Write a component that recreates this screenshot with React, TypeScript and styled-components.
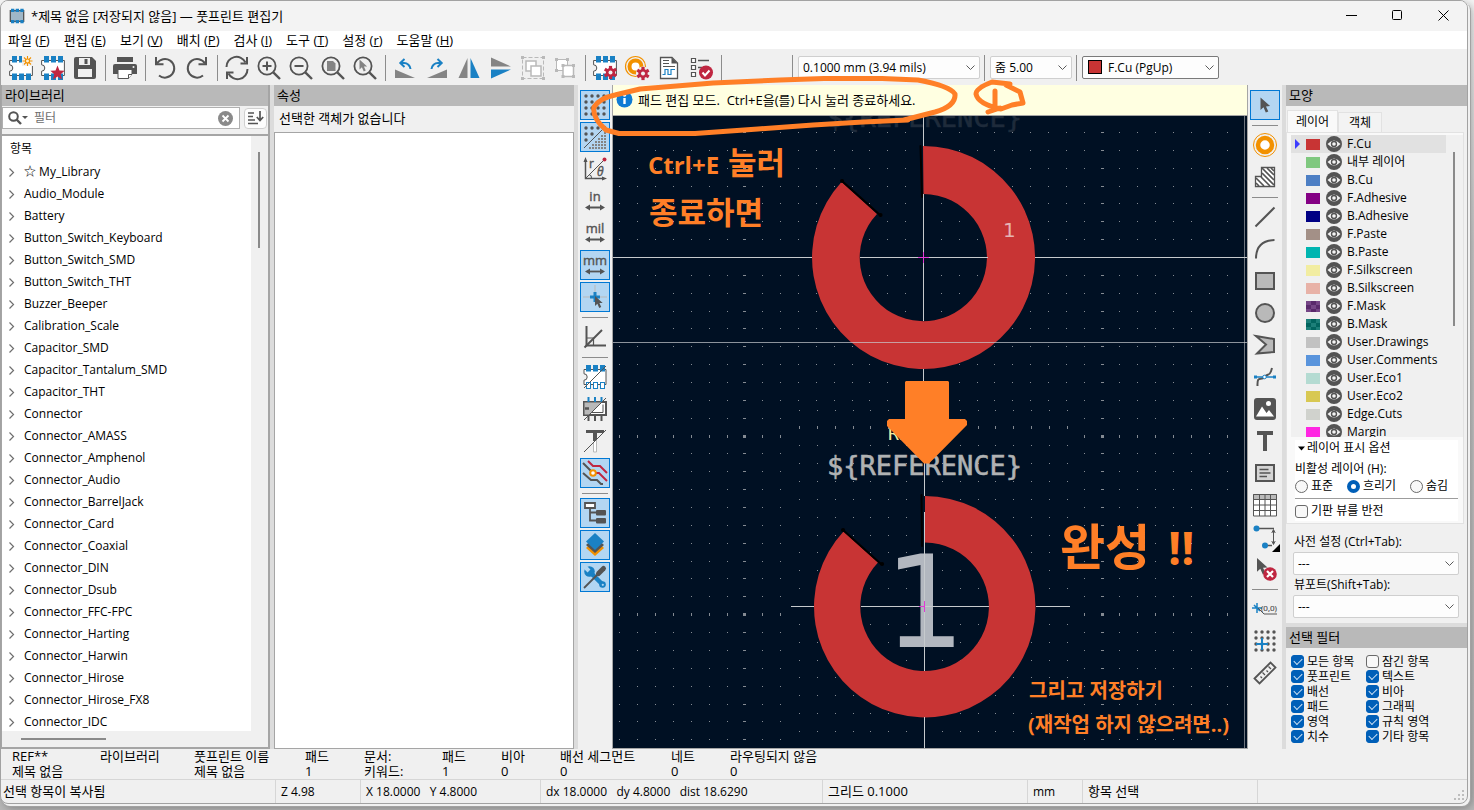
import React from "react";
import styled, { createGlobalStyle, css } from "styled-components";

const INK = "#545454";
const MID = "#848484";
const PALE = "#b9b9b9";
const BLUE = "#1a81c4";
const RED = "#bf2641";
const AMBER = "#f29100";
const MARKER = "#ff7f27";

const GlobalStyle = createGlobalStyle`
  * { box-sizing: border-box; }
  body {
    margin: 0;
    background: linear-gradient(#f4f4f4, #d0d0d0 30%, #b8b8b8);
    font-family: "Open Sans", "Noto Sans CJK KR", sans-serif;
    font-size: 12px;
    line-height: 16px;
    color: #000;
  }
  button, input, select { font: inherit; color: inherit; }
  button { border: 0; padding: 0; background: none; }
  ul { list-style: none; margin: 0; padding: 0; }
  svg { display: block; }
`;

/* ---------- window frame ---------- */

const Page = styled.div`
  height: 100vh;
  padding: 0 6px 6px 0;
  display: flex;
`;

const AppWindow = styled.div`
  flex: 1;
  min-width: 0;
  display: flex;
  flex-direction: column;
  overflow: hidden;
  background: #f0f0f0;
  border: 1px solid #a2a2a2;
  border-radius: 8px;
  box-shadow: 2px 2px 0 0 #f1f1f1, 3px 3px 0 0 #a2a2a2, 4px 4px 8px 0 rgba(0, 0, 0, 0.3);
`;

const TitleBar = styled.header`
  height: 30px;
  flex: none;
  display: flex;
  align-items: center;
  gap: 6px;
  padding: 0 1px 1px 8px;
  background: #f3f3f3;
`;

const Title = styled.h1`
  flex: 1;
  margin: 0;
  font-size: 13px;
  line-height: 16px;
  font-weight: 400;
`;

const WindowButtons = styled.div`
  display: flex;
`;

const WindowButton = styled.button`
  width: 46px;
  height: 28px;
  display: grid;
  place-items: center;
`;

const MenuBar = styled.nav`
  height: 18px;
  flex: none;
  display: flex;
  gap: 14px;
  padding: 0 7px;
  background: #fff;
`;

const MenuButton = styled.button`
  font-size: 13px;
  line-height: 18px;
  white-space: nowrap;
`;

const MainToolbar = styled.div`
  height: 36px;
  flex: none;
  display: flex;
  align-items: center;
  padding: 1px 5px 0;
`;

const ToolGroup = styled.div`
  display: flex;
  gap: 2px;
  padding-right: 5px;
`;

const ToolButton = styled.button<{ $on?: boolean }>`
  width: 30px;
  height: 30px;
  flex: none;
  display: grid;
  place-items: center;
  border: 1px solid transparent;
  ${(p) => p.$on && css`
    background: #b3d6f2;
    border-color: #0078d4;
  `}
`;

const Divider = styled.span<{ $before?: number; $after?: number }>`
  width: 1px;
  height: 26px;
  flex: none;
  margin-left: ${(p) => p.$before ?? 0}px;
  margin-right: ${(p) => p.$after ?? 4}px;
  background: #8c8c8c;
`;

const SelectWrap = styled.div<{ $w?: number; $strong?: boolean }>`
  position: relative;
  width: ${(p) => (p.$w ? `${p.$w}px` : "auto")};
  height: 23px;
  flex: none;
  > svg { position: absolute; right: 5px; top: 9px; pointer-events: none; }
  select { border-color: ${(p) => (p.$strong ? "#7a7a7a" : "#cfcfcf")}; }
`;

const Select = styled.select<{ $indent?: number }>`
  appearance: none;
  width: 100%;
  height: 100%;
  padding: 0 18px 0 ${(p) => p.$indent ?? 4}px;
  border: 1px solid;
  border-radius: 2px;
  background: #fdfdfd;
`;

const SelectSwatch = styled.span`
  position: absolute;
  left: 6px;
  top: 4px;
  width: 14px;
  height: 14px;
  background: #c83434;
  border: 1px solid #000;
`;

const Workspace = styled.main`
  flex: 1;
  min-height: 0;
  display: flex;
`;

const PaneHeader = styled.h2`
  height: 21px;
  flex: none;
  margin: 0;
  padding: 0 3px;
  line-height: 20px;
  font-size: 13px;
  font-weight: 400;
  background: #b9b9b9;
`;

const Sash = styled.div`
  flex: none;
  width: 4px;
  background: #dcdcdc;
`;

const HSash = styled.div`
  flex: none;
  height: 4px;
  background: #dcdcdc;
`;

/* ---------- library tree ---------- */

const LibraryPane = styled.aside`
  width: 269px;
  flex: none;
  display: flex;
  flex-direction: column;
  border: solid #a5a5a5;
  border-width: 0 2px 0 1px;
`;

const FilterRow = styled.div`
  display: flex;
  align-items: center;
  justify-content: space-between;
  padding: 1px 1px 5px 0;
`;

const FilterBox = styled.div`
  width: 238px;
  height: 22px;
  display: flex;
  align-items: center;
  gap: 5px;
  padding: 0 6px 0 5px;
  background: #fff;
  border: 1px solid #b0b0b0;
`;

const FilterInput = styled.input`
  flex: 1;
  min-width: 0;
  border: 0;
  outline: 0;
  padding: 0;
  background: none;
  &::placeholder { color: #6d6d6d; opacity: 1; }
`;

const SortButton = styled.button`
  width: 23px;
  height: 21px;
  display: grid;
  place-items: center;
  border: 1px solid #d0d0d0;
  border-radius: 4px;
  background: #fdfdfd;
`;

const TreeBox = styled.div`
  flex: 1;
  min-height: 0;
  display: flex;
  border-top: 2px solid #a5a5a5;
  border-bottom: 2px solid #a5a5a5;
  background: #fff;
`;

const TreeMain = styled.div`
  flex: 1;
  min-width: 0;
  display: flex;
  flex-direction: column;
`;

const TreeCaption = styled.div`
  height: 25px;
  flex: none;
  padding: 5px 8px;
`;

const TreeList = styled.ul`
  flex: 1;
  min-height: 0;
  overflow: hidden;
`;

const TreeRow = styled.button`
  width: 100%;
  height: 22px;
  display: flex;
  align-items: center;
  gap: 8px;
  padding: 0 6px;
  text-align: left;
`;

const HScroll = styled.div`
  height: 16px;
  flex: none;
  display: flex;
  align-items: center;
  padding-left: 19px;
  background: #f0f0f0;
  &::after { content: ""; width: 85px; height: 2px; background: #8a8a8a; }
`;

const VScroll = styled.div<{ $top: number; $len: number }>`
  width: 17px;
  flex: none;
  padding: ${(p) => p.$top}px 0 0 7px;
  background: #f0f0f0;
  &::after {
    content: "";
    display: block;
    width: 2px;
    height: ${(p) => p.$len}px;
    background: #8a8a8a;
  }
`;

/* ---------- properties ---------- */

const PropertiesPane = styled.aside`
  width: 300px;
  flex: none;
  display: flex;
  flex-direction: column;
`;

const EmptyNote = styled.p`
  margin: 0;
  height: 26px;
  padding: 0 5px;
  font-size: 13px;
  line-height: 24px;
`;

const PropertyGrid = styled.div`
  flex: 1;
  background: #fff;
  border: 1px solid #a5a5a5;
`;

/* ---------- side toolbars and canvas ---------- */

const SideToolbar = styled.div`
  flex: none;
  display: flex;
  flex-direction: column;
  gap: 2px;
  padding: 5px 2px;
`;

const SideDivider = styled.span`
  height: 6px;
  margin: 0 2px;
  display: flex;
  align-items: center;
  &::after { content: ""; flex: 1; height: 1px; background: #8c8c8c; }
`;

const CanvasColumn = styled.section`
  position: relative;
  flex: 1;
  min-width: 0;
  display: flex;
  flex-direction: column;
  border: solid #a5a5a5;
  border-width: 0 1px 1px 1px;
`;

const InfoBar = styled.div`
  height: 31px;
  flex: none;
  display: flex;
  align-items: center;
  gap: 5px;
  padding: 0 3px 1px;
  font-size: 13px;
  background: #ffffe1;
  border-bottom: 1px solid #a5a5a5;
  white-space: pre;
`;

const Board = styled.svg`
  flex: 1;
  min-height: 0;
  width: 100%;
  background: #001023;
`;

const Markup = styled.svg`
  position: absolute;
  left: 0;
  top: 0;
  overflow: visible;
  pointer-events: none;
  z-index: 2;
`;

/* ---------- appearance ---------- */

const AppearancePane = styled.aside`
  width: 181px;
  flex: none;
  display: flex;
  flex-direction: column;
`;

const Tabs = styled.div`
  display: flex;
  align-items: flex-end;
  height: 26px;
  flex: none;
  padding: 0 1px;
`;

const Tab = styled.button<{ $active?: boolean }>`
  width: ${(p) => (p.$active ? 51 : 44)}px;
  height: ${(p) => (p.$active ? 22 : 20)}px;
  border: 1px solid #e2e2e2;
  border-bottom: 0;
  background: ${(p) => (p.$active ? "#f9f9f9" : "#f3f3f3")};
`;

const TabPage = styled.div`
  flex: 1;
  min-height: 0;
  display: flex;
  flex-direction: column;
  margin: 0 3px 0 0;
  padding: 2px 0 2px 4px;
  background: #f9f9f9;
  border: 1px solid #e2e2e2;
`;

const LayerArea = styled.div`
  flex: 1;
  min-height: 0;
  display: flex;
  overflow: hidden;
  background: #f0f0f0;
`;

const LayerList = styled.ul`
  flex: 1;
  min-width: 0;
`;

const LayerRow = styled.li<{ $active?: boolean }>`
  height: 18px;
  display: flex;
  align-items: center;
  background: ${(p) => (p.$active ? "#e1e1e1" : "none")};
`;

const ActiveMark = styled.span<{ $show?: boolean }>`
  width: 5px;
  margin: 0 6px 0 4px;
  border: 5px solid transparent;
  border-left-color: ${(p) => (p.$show ? "#3c3cff" : "transparent")};
  border-right: 0;
`;

const Swatch = styled.span<{ $color: string; $alt?: string }>`
  width: 14px;
  height: 11px;
  margin-right: 6px;
  background: ${(p) =>
    p.$alt
      ? `repeating-conic-gradient(${p.$color} 0 25%, ${p.$alt} 0 50%) 0 0 / 10px 8px`
      : p.$color};
`;

const EyeButton = styled.button`
  width: 16px;
  height: 16px;
  margin-right: 5px;
`;

const LayerOptions = styled.div`
  flex: none;
  display: flex;
  flex-direction: column;
  margin: 3px 5px 0 4px;
  padding-bottom: 2px;
  background: #fff;
`;

const OptionsToggle = styled.button`
  display: flex;
  align-items: center;
  gap: 2px;
  height: 16px;
  padding-left: 3px;
  line-height: 16px;
`;

const RadioSet = styled.fieldset`
  margin: 0;
  padding: 0;
  border: 0;
  min-width: 0;
`;

const RadioLegend = styled.legend`
  padding: 4px 0 0;
  line-height: 18px;
`;

const RadioRow = styled.div`
  display: flex;
  justify-content: space-between;
  padding: 0 10px 4px 0;
`;

const FlipRow = styled.div`
  border-top: 1px solid #9c9c9c;
  padding-top: 4px;
`;

const Choice = styled.label`
  display: flex;
  align-items: center;
  gap: 3px;
  height: 16px;
  white-space: nowrap;
`;

const Radio = styled.input`
  appearance: none;
  flex: none;
  width: 13px;
  height: 13px;
  margin: 0;
  border: 1px solid #6a6a6a;
  border-radius: 50%;
  background: #f8f8f8;
  &:checked { border: 4px solid #005fb8; background: #fff; }
`;

const Check = styled.input`
  appearance: none;
  flex: none;
  width: 13px;
  height: 13px;
  margin: 0;
  display: grid;
  place-items: center;
  border: 1px solid #6a6a6a;
  border-radius: 3px;
  background: #f8f8f8;
  &:checked { border-color: #005fb8; background: #005fb8; }
  &:checked::after {
    content: "";
    width: 7px;
    height: 4px;
    margin-bottom: 2px;
    border: solid #cfe3f5;
    border-width: 0 0 1px 1px;
    transform: rotate(-45deg);
  }
`;

const Presets = styled.div`
  flex: none;
  display: flex;
  flex-direction: column;
  padding: 8px 8px 5px 7px;
  label { height: 20px; line-height: 20px; padding-left: 1px; }
`;

const FilterGrid = styled.div`
  flex: none;
  display: grid;
  grid-template-columns: 75px 1fr;
  padding: 6px 4px 5px 5px;
  label { height: 15px; }
`;

/* ---------- message panel and status bar ---------- */

const MessagePanel = styled.dl`
  flex: none;
  height: 31px;
  margin: 0;
  padding-left: 11px;
  display: grid;
  grid-template-columns: 88px 94px 111px 59px 78px 59px 59px 111px 59px 1fr;
  font-size: 13px;
  line-height: 15px;
  border-bottom: 1px solid #d6d6d6;
  dt, dd { margin: 0; height: 15px; white-space: nowrap; }
`;

const StatusBar = styled.footer`
  flex: none;
  height: 23px;
  display: grid;
  grid-template-columns: 275px 85px 180px 282px 205px 55px 175px 1fr;
  line-height: 23px;
`;

const StatusCell = styled.span<{ $large?: boolean }>`
  padding-left: 5px;
  font-size: ${(p) => (p.$large ? 13 : 12)}px;
  white-space: pre;
  border-right: 1px solid #d6d6d6;
  &:first-child { padding-left: 2px; }
  &:last-child { border: 0; display: flex; align-items: flex-end; justify-content: flex-end; }
`;

/* ---------- icons ---------- */

const gear = (x: number, y: number, s = 1) => (
  <g transform={`translate(${x} ${y}) scale(${s})`}>
    <circle r="4.6" fill={RED} />
    {[0, 60, 120].map((a) => (
      <rect key={a} x="-1.6" y="-6.6" width="3.2" height="13.2" fill={RED} transform={`rotate(${a})`} />
    ))}
    <circle r="2" fill="#f0f0f0" />
  </g>
);

const chip = (
  <g>
    <path d="M.6 4.5V8.8a3 3 0 0 1 0 6.4v4.3H23.4V4.5z" fill="#fff" stroke={INK} strokeWidth="1" />
    {[3, 10, 17].map((x) => (
      <g key={x} fill={BLUE}>
        <rect x={x} y="0" width="5" height="6.5" />
        <rect x={x} y="17.5" width="5" height="6.5" />
      </g>
    ))}
  </g>
);

const dots = (xs: number[], ys: number[], r: number, skip?: (x: number, y: number) => boolean) =>
  ys.flatMap((y) =>
    xs.filter((x) => !skip?.(x, y)).map((x) => <circle key={`${x}-${y}`} cx={x} cy={y} r={r} fill={INK} />)
  );

const lens = (
  <g fill="none" stroke={INK} strokeWidth="2">
    <circle cx="10" cy="10" r="8.6" strokeWidth="1.8" />
    <path d="M16.3 16.3 23 23" strokeWidth="2.4" />
  </g>
);

const cursorPath = "M0 0V12.5L3 9.8 5.3 15 7.8 13.9 5.5 8.9 9.6 8.6Z";

const unit = (label: string) => (
  <g>
    <text x="12" y="12" textAnchor="middle" fontSize="13" fontFamily="Open Sans" fill={INK} stroke={INK} strokeWidth=".4">
      {label}
    </text>
    <path d="M5 18.5H19" stroke={INK} strokeWidth="1.8" />
    <path d="M2 18.5 7 15.5V21.5ZM22 18.5 17 15.5V21.5Z" fill={INK} />
  </g>
);

const slash = <path d="M1 23 23 1" stroke={INK} strokeWidth="1" />;

const icons: Record<string, React.ReactNode> = {
  newFootprint: (
    <g>
      {chip}
      <rect x="13" y="0" width="11" height="10" fill="#f0f0f0" />
      <g stroke={AMBER} strokeWidth="1.1">
        <path d="M18.5 0V10M13.5 5H23.5M15 1.5 22 8.5M22 1.5 15 8.5" />
        <circle cx="18.5" cy="5" r="2" fill="#fff3d6" />
      </g>
    </g>
  ),
  wizard: (
    <g>
      {chip}
      <path d="m16.5 9.5 2 5 5.2.3-4 3.4 1.3 5.3-4.5-2.9-4.5 2.9 1.3-5.3-4-3.4 5.2-.3z" fill={RED} />
    </g>
  ),
  save: (
    <g>
      <path d="M1 3a2 2 0 0 1 2-2H19l4 4V21a2 2 0 0 1-2 2H3a2 2 0 0 1-2-2Z" fill={INK} />
      <path d="M6 2H17V9H6Z" fill="#f0f0f0" />
      <rect x="11.5" y="3" width="3" height="5" fill={INK} />
      <path d="M5 13H19V21H5Z" fill="#f0f0f0" />
    </g>
  ),
  print: (
    <g>
      <path d="M4 1H20V6H4Z" fill={INK} />
      <path d="M2 8H22a2 2 0 0 1 2 2V18H0V10A2 2 0 0 1 2 8Z" fill={INK} />
      <path d="M5 13.5H19V18L15.5 22.5H5Z" fill="#fff" stroke={INK} />
      <path d="M15.5 22.5V18.5H19" fill="#fff" stroke={INK} />
      <circle cx="20.5" cy="11" r="1" fill="#f0f0f0" />
    </g>
  ),
  undo: (
    <g fill="none" stroke={INK} strokeWidth="2">
      <path d="M4 7.5A9.3 9.3 0 1 1 6 19.5" />
      <path d="M3 1V8.3H10.5" />
    </g>
  ),
  redo: (
    <g fill="none" stroke={INK} strokeWidth="2">
      <path d="M20 7.5A9.3 9.3 0 1 0 18 19.5" />
      <path d="M21 1V8.3H13.5" />
    </g>
  ),
  refresh: (
    <g fill="none" stroke={INK} strokeWidth="2">
      <path d="M1.5 11A10 10 0 0 1 20.5 6.5M22.5 13A10 10 0 0 1 3.5 17.5" />
      <path d="M22 1V7.5H15.5M2 23V16.5H8.5" />
    </g>
  ),
  zoomIn: <g>{lens}<path d="M10 5.5V14.5M5.5 10H14.5" stroke={INK} strokeWidth="2" /></g>,
  zoomOut: <g>{lens}<path d="M5.5 10H14.5" stroke={INK} strokeWidth="2" /></g>,
  zoomPage: <g>{lens}<path d="M6 5H12L14.5 7.5V15H6Z" fill={MID} /></g>,
  zoomObject: <g>{lens}<path d={cursorPath} fill={MID} transform="translate(6.5 3.5) scale(.8)" /></g>,
  rotateLeft: (
    <g>
      <path d="M2 13.5 22 22H2Z" fill={MID} />
      <path d="M7.5 7H11A6.5 6.5 0 0 1 17.5 13" fill="none" stroke={BLUE} strokeWidth="2" />
      <path d="M11.5 3 7.3 7 11.5 11" fill="none" stroke={BLUE} strokeWidth="2" />
    </g>
  ),
  rotateRight: (
    <g>
      <path d="M22 13.5 2 22H22Z" fill={MID} />
      <path d="M16.5 7H13A6.5 6.5 0 0 0 6.5 13" fill="none" stroke={BLUE} strokeWidth="2" />
      <path d="M12.5 3 16.7 7 12.5 11" fill="none" stroke={BLUE} strokeWidth="2" />
    </g>
  ),
  mirrorH: <g><path d="M10.5 2V22H1.5Z" fill={MID} /><path d="M13.5 2V22H22.5Z" fill={BLUE} /></g>,
  mirrorV: <g><path d="M2 1.5V10.5H22Z" fill={MID} /><path d="M2 22.5V13.5H22Z" fill={BLUE} /></g>,
  group: (
    <g fill="none" stroke={PALE}>
      <path d="M1.5 1.5H22.5V22.5H1.5Z" strokeDasharray="4 2" />
      <path d="M5 5H15V15H5Z" fill="#fff" strokeWidth="1.5" />
      <path d="M10 10H20V20H10Z" fill="#fff" strokeWidth="1.5" />
      <path d="M0 0h3v3h-3zM21 0h3v3h-3zM0 21h3v3h-3zM21 21h3v3h-3z" fill={PALE} stroke="none" />
    </g>
  ),
  ungroup: (
    <g fill="none" stroke={PALE}>
      <path d="M3.5 3.5H14.5V14.5H3.5Z" fill="#fff" />
      <path d="M10 9.5H20.5V20.5H10Z" fill="#fff" strokeWidth="1.5" />
      <path d="M2 2h3v3h-3zM13 2h3v3h-3zM2 13h3v3h-3zM8.5 8h3v3h-3zM19 8h3v3h-3zM8.5 19h3v3h-3zM19 19h3v3h-3z" fill={PALE} stroke="none" />
    </g>
  ),
  footprintSetup: <g>{chip}{gear(17.5, 16.5)}</g>,
  padSetup: (
    <g>
      <circle cx="10.5" cy="10.5" r="10" fill="none" stroke={AMBER} strokeWidth="1.2" />
      <circle cx="10.5" cy="10.5" r="6" fill="#fff" stroke={AMBER} strokeWidth="4" />
      <circle cx="18" cy="17.5" r="7" fill="#f0f0f0" />
      {gear(18, 17.5)}
    </g>
  ),
  datasheet: (
    <g>
      <path d="M3.5 1.5H15L20.5 7V22.5H3.5Z" fill="#fff" stroke={INK} strokeWidth="1.3" />
      <path d="M14.5 1.5V7.5H20.5Z" fill={INK} />
      <path d="M6 4.5H12M6 7.5H12M6 10.5H18" stroke={INK} />
      <path d="M5.5 18.5H8V13.5H11V18.5H14V13.5H18" fill="none" stroke={BLUE} strokeWidth="1.2" />
    </g>
  ),
  check: (
    <g>
      <path d="M2.5 2.5H6.5V6.5H2.5ZM2.5 9.5H6.5V13.5H2.5ZM2.5 16.5H6.5V20.5H2.5Z" fill="#fff" stroke={INK} strokeWidth="1.2" />
      <path d="M9 4.5H20M9 11.5H13" stroke={INK} strokeWidth="1.5" />
      <circle cx="17" cy="16.5" r="7" fill={RED} />
      <path d="m13.5 16.5 2.5 3 4.5-5" fill="none" stroke="#fff" strokeWidth="2" />
    </g>
  ),
  grid: <g>{dots([3, 9, 15, 21], [3, 9, 15, 21], 1.7)}</g>,
  gridOverride: (
    <g>
      {dots([3, 9, 15], [3, 9, 15], 1.7, (x, y) => x + y > 19)}
      {[0, 1, 2, 3, 4, 5].flatMap((r) =>
        Array.from({ length: r + 1 }, (_, c) => (
          <rect key={`${r}-${c}`} x={21 - c * 3} y={7 + r * 3} width="2" height="2" fill={MID} />
        ))
      )}
      {slash}
    </g>
  ),
  polar: (
    <g stroke={INK} fill="none">
      <path d="M2.5 3V21.5H21" strokeWidth="1.5" />
      <path d="M.5 5 2.5 0 4.5 5ZM19 19.5 24 21.5 19 23.5Z" fill={INK} stroke="none" />
      <path d="M2.5 21.5 21 3M6 17.5Q9 18 8.5 21.5" />
      <circle cx="21.5" cy="2.5" r="2" fill={RED} stroke="none" />
      <text x="6" y="11" fontSize="12" fill={INK} strokeWidth=".4">r</text>
      <text x="14" y="19" fontSize="12" fontStyle="italic" fill={INK} strokeWidth=".4">θ</text>
    </g>
  ),
  inch: unit("in"),
  mil: unit("mil"),
  mm: unit("mm"),
  crosshair: (
    <g>
      <path d="M12 0V12M0 12H24" stroke={PALE} />
      <path d="M12 7V17M7 12H17" stroke={BLUE} strokeWidth="3" />
      <path d={cursorPath} fill={INK} transform="translate(12 11) scale(.8)" />
    </g>
  ),
  angle: (
    <g fill="none" stroke={INK}>
      <path d="M3.5 1V20.5H23" strokeWidth="2" />
      <path d="M1.5 22.5 19 5" strokeWidth="2" />
      <path d="M4 13H10.5V20" strokeWidth="1.2" />
    </g>
  ),
  padOutline: (
    <g>
      <path d="M1 4.5V8.8a3 3 0 0 1 0 6.4v4.3H23V4.5z" fill="#fff" stroke={INK} />
      {[3, 10, 17].map((x) => (
        <g key={x}>
          <rect x={x} y="0" width="5" height="6.5" fill={BLUE} />
          <rect x={x + 0.5} y="17.5" width="4" height="6" fill="#fff" stroke={BLUE} />
        </g>
      ))}
      {slash}
    </g>
  ),
  padFill: (
    <g>
      <path d="M1 5H23V18H1Z" fill="#fff" stroke={INK} strokeWidth="2" />
      <path d="M20 7.5V15.5H9" fill="none" stroke={INK} />
      <path d="M1 5H19L6 18H1Z" fill={PALE} stroke={INK} />
      <path d="M5.5 0V5M12 0V5M18.5 0V5" stroke={BLUE} strokeWidth="2" />
      <path d="M5.5 19V24M12 19V24M18.5 19V24" stroke={INK} strokeWidth="2" />
      <path d="M2 11.5h4" stroke={INK} strokeWidth="2.5" />
      {slash}
    </g>
  ),
  textOutline: (
    <g>
      <path d="M3 2.5H21" stroke={INK} strokeWidth="3" />
      <path d="M12 3V12" stroke={INK} strokeWidth="4" />
      <path d="M10.5 13V23H13.5V11" fill="#fff" stroke={PALE} />
      {slash}
    </g>
  ),
  tracks: (
    <g fill="none" strokeWidth="2">
      <path d="M5 0 10 5H17L24 12M12 12H16L24 20" stroke={RED} />
      <path d="M0 2 8 10M0 12 8 19H14L18 23H20" stroke={INK} />
      <circle cx="10" cy="12" r="2.8" stroke={AMBER} fill="#fff" />
    </g>
  ),
  tree: (
    <g>
      <path d="M2 2H12V7H2Z" fill="#fff" stroke={INK} strokeWidth="1.8" />
      <path d="M7 7V19.5H14M7 11.5H14" fill="none" stroke={INK} strokeWidth="1.8" />
      <rect x="13" y="9" width="10" height="5.5" rx="1" fill={INK} />
      <rect x="13" y="17" width="10" height="5.5" rx="1" fill={INK} />
    </g>
  ),
  layers: (
    <g>
      <path d="M12 6.5 21 15 12 23 3 15Z" fill={AMBER} />
      <path d="M12 4 21 12 12 20 3 12Z" fill={INK} />
      <path d="M12 0 21 8.5 12 17 3 8.5Z" fill={BLUE} />
    </g>
  ),
  tools: (
    <g>
      <path d="M6.5 6.5 20 20" stroke={BLUE} strokeWidth="4.5" strokeLinecap="round" />
      <circle cx="6.5" cy="6.5" r="5.3" fill={BLUE} />
      <path d="M0 0 6 6" stroke="#b3d6f2" strokeWidth="4" />
      <circle cx="19.5" cy="19.5" r="3.3" fill={BLUE} />
      <circle cx="19.8" cy="19.8" r="1.1" fill="#b3d6f2" />
      <path d="M1 23 15 9" stroke={INK} strokeWidth="1.8" />
      <path d="M15.5 8.5 20.5 3.5" stroke={INK} strokeWidth="5" strokeLinecap="round" />
    </g>
  ),
  select: <path d={cursorPath} fill={INK} transform="translate(7.5 4.5)" />,
  pad: (
    <g>
      <circle cx="12" cy="12" r="11.5" fill="none" stroke={AMBER} />
      <circle cx="12" cy="12" r="7" fill="#fff" stroke={AMBER} strokeWidth="4.5" />
    </g>
  ),
  zone: (
    <g>
      <path d="M2.5 11.5H8.5V2.5H21.5V21.5H2.5Z" fill="#fff" stroke={INK} strokeWidth="1.3" />
      <path d="M9 3 21 15M14 3 21 10M9 8 21 20M3 13 11 21M8 12 17 21M3 18 6 21M18 3 21 6" stroke={INK} strokeWidth="1.7" />
    </g>
  ),
  line: <path d="M2.5 21.5 21.5 2.5" stroke={INK} strokeWidth="2" />,
  arc: <path d="M3 21.5Q3 3.5 21.5 3" fill="none" stroke={INK} strokeWidth="2" />,
  rect: <path d="M3 4H21V20H3Z" fill={PALE} stroke={INK} strokeWidth="2" />,
  circle: <circle cx="12" cy="12" r="9" fill={PALE} stroke={INK} strokeWidth="2" />,
  polygon: <path d="M3 3 21 6V19L4 20.5 13 11.5Z" fill={PALE} stroke={INK} strokeWidth="2" />,
  bezier: (
    <g>
      <path d="M4.5 21C4 10 8 16 11.5 12S17 12 19 3" fill="none" stroke={INK} strokeWidth="2" />
      <path d="M2 12H22" stroke={BLUE} strokeWidth="1.5" />
      <path d="M1 10.5h3v3h-3zM20 10.5h3v3h-3z" fill={BLUE} />
      <circle cx="11.5" cy="12" r="1.8" fill="#fff" stroke={BLUE} />
    </g>
  ),
  image: (
    <g>
      <rect x="1" y="1" width="22" height="22" rx="3" fill={INK} />
      <circle cx="15.5" cy="6.5" r="2.5" fill="#fff" />
      <path d="M3 19.5 9 9.5 13.5 16 16 13 21 19.5Z" fill="#fff" />
    </g>
  ),
  text: <path d="M4 2H20V6H14V22H10V6H4Z" fill={INK} />,
  textbox: (
    <g stroke={INK}>
      <path d="M3 4H21V20H3Z" fill="#d4d4d4" strokeWidth="2" />
      <path d="M6.5 8.5H15.5M6.5 12H17.5M6.5 15.5H14" strokeWidth="1.3" />
    </g>
  ),
  table: (
    <g stroke={INK}>
      <path d="M.5 1.5H23.5V23H.5Z" fill="#fff" />
      <path d="M.5 1.5H23.5V6.5H.5Z" fill={PALE} />
      <path d="M6.5 1.5V23M12 1.5V23M17.5 1.5V23M.5 12H23.5M.5 17.5H23.5" fill="none" />
    </g>
  ),
  dimension: (
    <g>
      <path d="M4 3.5H21M12 20.5H19" stroke={INK} strokeWidth="1.3" />
      <circle cx="3.5" cy="3.5" r="3" fill={BLUE} />
      <circle cx="12" cy="20.5" r="3" fill={BLUE} />
      <path d="M20.5 5V19M18.8 8 20.5 4.5 22.2 8M18.8 16 20.5 19.5 22.2 16" fill="none" stroke={INK} />
      <path d="M27 19V27H19Z" fill="#000" />
    </g>
  ),
  delete: (
    <g>
      <path d={cursorPath} fill={INK} transform="translate(4 1) scale(1.1)" />
      <circle cx="17" cy="17" r="6.8" fill={RED} />
      <path d="m14 14 6 6M20 14l-6 6" stroke="#fff" strokeWidth="2.2" />
    </g>
  ),
  origin: (
    <g>
      <path d="M4 6V16M-1 11H9M1 8 7 14" stroke={BLUE} strokeWidth="1.5" />
      <path d="M5 11 11 17H24" stroke={INK} fill="none" />
      <text x="8" y="14" fontSize="8" fill={INK} stroke={INK} strokeWidth=".2" fontFamily="Open Sans">(0,0)</text>
    </g>
  ),
  gridOrigin: (
    <g>
      {dots([3, 9, 15, 21], [3, 9, 15, 21], 1.7)}
      <path d="M9 9V21M3 15H15" stroke={BLUE} strokeWidth="2" />
    </g>
  ),
  measure: (
    <g fill="none" stroke={INK} strokeWidth="1.8">
      <path d="M1.5 17.5 17.5 1.5 22.5 6.5 6.5 22.5Z" />
      <path d="M9 17 7.5 15.5M12 14 9.5 11.5M15 11 13.5 9.5M18 8 15.5 5.5" strokeWidth="1.3" />
    </g>
  ),
};

const Icon = ({ name, size = 24 }: { name: string; size?: number }) => (
  <svg width={size} height={size} viewBox="0 0 24 24" overflow="visible" aria-hidden="true">
    {icons[name]}
  </svg>
);

const Chevron = () => (
  <svg width="9" height="6" viewBox="0 0 9 6" fill="none" stroke="#5a5a5a" aria-hidden="true">
    <path d="M.5.5 4.5 4.5 8.5.5" />
  </svg>
);

const Tool = ({ name, label, on }: { name: string; label: string; on?: boolean }) => (
  <ToolButton $on={on} aria-label={label} aria-pressed={on}>
    <Icon name={name} />
  </ToolButton>
);

/* ---------- data ---------- */

const menus = [
  ["파일", "F"], ["편집", "E"], ["보기", "V"], ["배치", "P"],
  ["검사", "I"], ["도구", "T"], ["설정", "r"], ["도움말", "H"],
];

const libraries = [
  "☆ My_Library", "Audio_Module", "Battery", "Button_Switch_Keyboard", "Button_Switch_SMD",
  "Button_Switch_THT", "Buzzer_Beeper", "Calibration_Scale", "Capacitor_SMD",
  "Capacitor_Tantalum_SMD", "Capacitor_THT", "Connector", "Connector_AMASS",
  "Connector_Amphenol", "Connector_Audio", "Connector_BarrelJack", "Connector_Card",
  "Connector_Coaxial", "Connector_DIN", "Connector_Dsub", "Connector_FFC-FPC",
  "Connector_Harting", "Connector_Harwin", "Connector_Hirose", "Connector_Hirose_FX8",
  "Connector_IDC",
];

const layers: [string, string, string?][] = [
  ["F.Cu", "#c83434"], ["내부 레이어", "#7fc87f"], ["B.Cu", "#4d7fc4"],
  ["F.Adhesive", "#840084"], ["B.Adhesive", "#000084"], ["F.Paste", "#a39087"],
  ["B.Paste", "#00b5b0"], ["F.Silkscreen", "#f2eda1"], ["B.Silkscreen", "#e8b2a7"],
  ["F.Mask", "#5a2a6c", "#754686"], ["B.Mask", "#02655f", "#1d7f79"],
  ["User.Drawings", "#c2c2c2"], ["User.Comments", "#5994dc"], ["User.Eco1", "#b4dbd2"],
  ["User.Eco2", "#d8c852"], ["Edge.Cuts", "#d0d2cd"], ["Margin", "#ff26e2"],
];

const leftTools: (null | [string, string, boolean?])[] = [
  ["grid", "격자 표시", true], ["gridOverride", "격자 재정의", true], ["polar", "극좌표"],
  ["inch", "인치"], ["mil", "밀"], ["mm", "밀리미터", true], ["crosshair", "전체 십자선", true], null,
  ["angle", "45도 제한"], null,
  ["padOutline", "패드 윤곽선"], ["padFill", "그래픽 윤곽선"], ["textOutline", "텍스트 윤곽선"],
  ["tracks", "흐리게", true], null,
  ["tree", "라이브러리 트리", true], ["layers", "모양 관리자", true], ["tools", "속성 관리자", true],
];

const rightTools: (null | [string, string, boolean?])[] = [
  ["select", "선택", true], null, ["pad", "패드 추가"], ["zone", "규칙 영역"], null,
  ["line", "선"], ["arc", "호"], ["rect", "사각형"], ["circle", "원"], ["polygon", "다각형"],
  ["bezier", "베지어"], ["image", "이미지"], ["text", "텍스트"], ["textbox", "텍스트 상자"],
  ["table", "표"], ["dimension", "치수"], ["delete", "삭제"], null,
  ["origin", "원점"], ["gridOrigin", "격자 원점"], ["measure", "측정"],
];

const selectionFilters: [string, boolean][] = [
  ["모든 항목", true], ["잠긴 항목", false], ["풋프린트", true], ["텍스트", true],
  ["배선", true], ["비아", true], ["패드", true], ["그래픽", true],
  ["영역", true], ["규칙 영역", true], ["치수", true], ["기타 항목", true],
];

const messages = [
  ["REF**", "제목 없음"], ["라이브러리", ""], ["풋프린트 이름", "제목 없음"], ["패드", "1"],
  ["문서:", "키워드:"], ["패드", "1"], ["비아", "0"], ["배선 세그먼트", "0"], ["네트", "0"],
  ["라우팅되지 않음", "0"],
];

const statuses: [string, boolean?][] = [
  ["선택 항목이 복사됨", true], ["Z 4.98"], ["X 18.0000   Y 4.8000"],
  ["dx 18.0000   dy 4.8000   dist 18.6290"], ["그리드 0.1000", true], ["mm"], ["항목 선택", true],
];

/* ---------- board drawing ---------- */

const PITCH = 17.86;

/* Grid points around an origin; every tenth row and column is drawn as short dashes. */
const GridDots = ({ ox, oy, x0, x1, y0, y1 }: { ox: number; oy: number; x0: number; x1: number; y0: number; y1: number }) => {
  const out: React.ReactNode[] = [];
  for (let i = Math.ceil((x0 - ox) / PITCH); ox + i * PITCH < x1; i++) {
    for (let j = Math.ceil((y0 - oy) / PITCH); oy + j * PITCH < y1; j++) {
      if (i === 0 || j === 0) continue;
      const x = Math.round(ox + i * PITCH);
      const y = Math.round(oy + j * PITCH);
      const w = i % 10 === 0 ? 3 : 1;
      const h = j % 10 === 0 ? 3 : 1;
      out.push(<rect key={`${i}:${j}`} x={x - (w >> 1)} y={y - (h >> 1)} width={w} height={h} />);
    }
  }
  return <g fill="#858b93">{out}</g>;
};

const BoardDrawing = () => (
  <Board viewBox="613 116 634 632" preserveAspectRatio="xMidYMid slice" role="img" aria-label="풋프린트">
    <text x="827" y="127" fontSize="27" fontFamily="DejaVu Sans Mono" fill="#1e2b3b" stroke="#1e2b3b" strokeWidth=".6">{"${REFERENCE}"}</text>
    <GridDots ox={923} oy={257} x0={613} x1={1247} y0={116} y1={404} />
    <GridDots ox={923} oy={257} x0={613} x1={790} y0={404} y1={748} />
    <GridDots ox={923} oy={257} x0={1072} x1={1247} y0={404} y1={748} />
    <GridDots ox={924} oy={606} x0={790} x1={1072} y0={404} y1={748} />
    <rect x="1244" y="116" width="1" height="632" fill="#6d747d" />

    <path d="M923 146A111.5 111.5 0 1 1 841.5 182L877 214A63.6 63.6 0 1 0 923.5 194Z" fill="#c83434" />
    <path d="M925 496A110.7 110.7 0 1 1 843.5 531.5L878 562.5A64.3 64.3 0 1 0 925 542.5Z" fill="#c83434" />

    <text x="1003" y="237" fontSize="20" fontFamily="DejaVu Sans" fill="#e6b4b4">1</text>
    <text x="884" y="647" fontSize="128" fontFamily="DejaVu Sans" fill="#b2b7bf">1</text>
    <text x="888" y="440" fontSize="18" fontFamily="DejaVu Sans Mono" fill="#f2eda1">REF**</text>
    <text x="827" y="475" fontSize="27" fontFamily="DejaVu Sans Mono" fill="#b0b2b3" stroke="#b0b2b3" strokeWidth=".6">{"${REFERENCE}"}</text>

    <g fill="#c6cacd">
      <rect x="613" y="257" width="199" height="1" />
      <rect x="860" y="257" width="128" height="1" />
      <rect x="1035" y="257" width="212" height="1" />
      <rect x="923" y="116" width="1" height="30" />
      <rect x="923" y="194" width="1" height="127" />
      <rect x="923" y="369" width="1" height="35" />
      <rect x="924" y="404" width="1" height="92" />
      <rect x="924" y="512" width="1" height="159" />
      <rect x="924" y="717" width="1" height="31" />
      <rect x="791" y="606" width="23" height="1" />
      <rect x="861" y="606" width="128" height="1" />
      <rect x="1036" y="606" width="34" height="1" />
    </g>
    <rect x="613" y="342" width="634" height="1" fill="#c8ccd0" opacity=".7" />
    <path d="M918 257.5H929M923.5 252V263M919 606.5H925M924.5 601V612" stroke="#e815d8" opacity=".8" />

    <g stroke="#000" fill="none" strokeLinecap="round">
      <path d="M842 181 880 215M843 530 881 564" strokeWidth="2" />
      <path d="M842 181h.1M880.5 215h.1M843 530h.1M882 564h.1" strokeWidth="4" />
      <path d="M920.5 146 922 197M921.5 495 922 546" strokeWidth="2" />
    </g>
    <path d="M906 381H948L949 382V419H965L967 421V425L929 463.5H924L887 426V421L889 419H905V382Z" fill={MARKER} />
  </Board>
);

const MarkupOverlay = () => (
  <Markup width="634" height="663" viewBox="613 85 634 663" fontFamily="'Open Sans', 'Noto Sans CJK KR', sans-serif" fontWeight="700" fill={MARKER}>
    <g fill="none" stroke={MARKER} strokeWidth="5" strokeLinejoin="round" strokeLinecap="round">
      <path d="M908 120 863 122 813 125 758 129 695 133.5H619L606 130Q592 118 594 107 600 98 615 95L640 89 713 83 780 80 824 78.5 882 78.5 918 80Q950 86 955 94 956 106 935 112L904 120" />
      <path d="M1010 84 992 82Q976 88 976 94 978 104 1001 109L1012 105 1023 103 1020 92 1006 85M995 91V107M988 112 1000 108" />
    </g>
    <text x="648" y="174" fontSize="24">Ctrl+E</text>
    <text x="728" y="174" fontSize="31">눌러</text>
    <text x="649" y="224" fontSize="31">종료하면</text>
    <text x="1060" y="565" fontSize="49">완성</text>
    <text x="1168" y="565" fontSize="46">!!</text>
    <text x="1029" y="698" fontSize="20">그리고 저장하기</text>
    <text x="1028" y="732" fontSize="20">(재작업 하지 않으려면..)</text>
  </Markup>
);

/* ---------- page ---------- */

const SideTools = ({ items }: { items: (null | [string, string, boolean?])[] }) => (
  <SideToolbar>
    {items.map((t, i) =>
      t ? <Tool key={t[0]} name={t[0]} label={t[1]} on={t[2]} /> : <SideDivider key={i} />
    )}
  </SideToolbar>
);

export default function App() {
  return (
    <Page>
      <GlobalStyle />
      <AppWindow>
        <TitleBar>
          <svg width="16" height="16" viewBox="0 0 24 24" aria-hidden="true">
            <path d="M2 4H22V20H2Z" fill="#9fb7c8" stroke={INK} strokeWidth="2" />
            <path d="M3 1h5v5h-5zM10 1h5v5h-5zM17 1h5v5h-5zM3 18h5v5h-5zM10 18h5v5h-5zM17 18h5v5h-5z" fill={BLUE} />
          </svg>
          <Title>*제목 없음 [저장되지 않음] — 풋프린트 편집기</Title>
          <WindowButtons>
            <WindowButton aria-label="최소화">
              <svg width="11" height="11" stroke="#000"><path d="M0 5.5H11" /></svg>
            </WindowButton>
            <WindowButton aria-label="최대화">
              <svg width="11" height="11" stroke="#000" fill="none"><rect x=".5" y=".5" width="9" height="9" rx="1" /></svg>
            </WindowButton>
            <WindowButton aria-label="닫기">
              <svg width="11" height="11" stroke="#000"><path d="M.5.5 10.5 10.5M10.5.5.5 10.5" /></svg>
            </WindowButton>
          </WindowButtons>
        </TitleBar>

        <MenuBar>
          {menus.map(([name, key]) => (
            <MenuButton key={key}>{name} (<u>{key}</u>)</MenuButton>
          ))}
        </MenuBar>

        <MainToolbar>
          <ToolGroup>
            <Tool name="newFootprint" label="새 풋프린트" />
            <Tool name="wizard" label="풋프린트 마법사" />
            <Tool name="save" label="저장" />
          </ToolGroup>
          <Divider />
          <ToolGroup><Tool name="print" label="인쇄" /></ToolGroup>
          <Divider />
          <ToolGroup>
            <Tool name="undo" label="실행 취소" />
            <Tool name="redo" label="다시 실행" />
          </ToolGroup>
          <Divider />
          <ToolGroup>
            <Tool name="refresh" label="새로 고침" />
            <Tool name="zoomIn" label="확대" />
            <Tool name="zoomOut" label="축소" />
            <Tool name="zoomPage" label="페이지에 맞춤" />
            <Tool name="zoomObject" label="객체에 맞춤" />
          </ToolGroup>
          <Divider />
          <ToolGroup>
            <Tool name="rotateLeft" label="반시계 방향 회전" />
            <Tool name="rotateRight" label="시계 방향 회전" />
            <Tool name="mirrorH" label="좌우 대칭" />
            <Tool name="mirrorV" label="상하 대칭" />
            <Tool name="group" label="그룹" />
            <Tool name="ungroup" label="그룹 해제" />
          </ToolGroup>
          <Divider />
          <ToolGroup>
            <Tool name="footprintSetup" label="풋프린트 속성" />
            <Tool name="padSetup" label="기본 패드 속성" />
            <Tool name="datasheet" label="데이터시트" />
            <Tool name="check" label="풋프린트 검사" />
          </ToolGroup>
          <Divider $after={70} />
          <Divider $after={5} />
          <SelectWrap $w={182}>
            <Select aria-label="격자"><option>0.1000 mm (3.94 mils)</option></Select>
            <Chevron />
          </SelectWrap>
          <Divider $before={4} $after={5} />
          <SelectWrap $w={82}>
            <Select aria-label="확대"><option>줌 5.00</option></Select>
            <Chevron />
          </SelectWrap>
          <Divider $before={4} $after={5} />
          <SelectWrap $w={137} $strong>
            <Select aria-label="레이어" $indent={25}><option>F.Cu (PgUp)</option></Select>
            <SelectSwatch />
            <Chevron />
          </SelectWrap>
        </MainToolbar>

        <Workspace>
          <LibraryPane>
            <PaneHeader>라이브러리</PaneHeader>
            <FilterRow>
              <FilterBox>
                <svg width="21" height="14" viewBox="0 0 21 14" aria-hidden="true">
                  <circle cx="5.5" cy="5.5" r="4.3" fill="none" stroke={INK} strokeWidth="2" />
                  <path d="m8.5 8.5 4.5 4.5" stroke={INK} strokeWidth="2.4" />
                  <path d="M14 5H20L17 8Z" fill={INK} />
                </svg>
                <FilterInput placeholder="필터" aria-label="필터" />
                <button aria-label="지우기">
                  <svg width="15" height="15" viewBox="0 0 15 15">
                    <circle cx="7.5" cy="7.5" r="7.5" fill="#8a8a8a" />
                    <path d="m4.5 4.5 6 6M10.5 4.5l-6 6" stroke="#fff" strokeWidth="1.8" />
                  </svg>
                </button>
              </FilterBox>
              <SortButton aria-label="정렬">
                <svg width="16" height="14" viewBox="0 0 16 14" stroke={INK} fill="none">
                  <path d="M0 2H6M0 5.5H5M0 9H7M0 12.5H10" strokeWidth="1.7" />
                  <path d="M12 0V9M8.8 6 12 9.5 15.2 6" strokeWidth="1.7" />
                </svg>
              </SortButton>
            </FilterRow>
            <TreeBox>
              <TreeMain>
                <TreeCaption>항목</TreeCaption>
                <TreeList>
                  {libraries.map((name) => (
                    <li key={name}>
                      <TreeRow>
                        <svg width="8" height="9" viewBox="0 0 8 9" fill="none" stroke="#6f6f6f" strokeWidth="1.2" aria-hidden="true">
                          <path d="M1.5.5 5.5 4.5 1.5 8.5" />
                        </svg>
                        {name}
                      </TreeRow>
                    </li>
                  ))}
                </TreeList>
                <HScroll />
              </TreeMain>
              <VScroll $top={16} $len={96} />
            </TreeBox>
          </LibraryPane>
          <Sash />
          <PropertiesPane>
            <PaneHeader>속성</PaneHeader>
            <EmptyNote>선택한 객체가 없습니다</EmptyNote>
            <PropertyGrid />
          </PropertiesPane>
          <Sash />
          <SideTools items={leftTools} />
          <CanvasColumn>
            <InfoBar>
              <svg width="17" height="17" viewBox="0 0 17 17" aria-hidden="true">
                <circle cx="8.5" cy="8.5" r="8" fill="#0f7bd4" />
                <path d="M8.5 7V13" stroke="#fff" strokeWidth="2.4" />
                <circle cx="8.5" cy="4.3" r="1.5" fill="#fff" />
              </svg>
              패드 편집 모드.  Ctrl+E을(를) 다시 눌러 종료하세요.
            </InfoBar>
            <BoardDrawing />
            <MarkupOverlay />
          </CanvasColumn>
          <SideTools items={rightTools} />
          <Sash />
          <AppearancePane>
            <PaneHeader>모양</PaneHeader>
            <Tabs role="tablist">
              <Tab role="tab" aria-selected $active>레이어</Tab>
              <Tab role="tab" aria-selected={false}>객체</Tab>
            </Tabs>
            <TabPage>
              <LayerArea>
                <LayerList>
                  {layers.map(([name, color, alt], i) => (
                    <LayerRow key={name} $active={i === 0}>
                      <ActiveMark $show={i === 0} />
                      <Swatch $color={color} $alt={alt} />
                      <EyeButton aria-label={`${name} 표시`}>
                        <svg width="16" height="16" viewBox="0 0 16 16">
                          <circle cx="8" cy="8" r="8" fill={INK} />
                          <path d="M1.5 8Q8 1 14.5 8 8 15 1.5 8Z" fill="#f4f4f4" />
                          <circle cx="8" cy="8" r="2.5" fill="#f4f4f4" stroke={INK} strokeWidth="1.4" />
                        </svg>
                      </EyeButton>
                      {name}
                    </LayerRow>
                  ))}
                </LayerList>
                <VScroll $top={17} $len={174} />
              </LayerArea>
              <LayerOptions>
                <OptionsToggle>
                  <svg width="7" height="5" aria-hidden="true"><path d="M0 .5H7L3.5 4.5Z" /></svg>
                  레이어 표시 옵션
                </OptionsToggle>
                <RadioSet>
                  <RadioLegend>비활성 레이어 (H):</RadioLegend>
                  <RadioRow>
                    <Choice><Radio type="radio" name="inactive" />표준</Choice>
                    <Choice><Radio type="radio" name="inactive" defaultChecked />흐리기</Choice>
                    <Choice><Radio type="radio" name="inactive" />숨김</Choice>
                  </RadioRow>
                </RadioSet>
                <FlipRow>
                  <Choice><Check type="checkbox" />기판 뷰를 반전</Choice>
                </FlipRow>
              </LayerOptions>
            </TabPage>
            <Presets>
              <label htmlFor="preset">사전 설정 (Ctrl+Tab):</label>
              <SelectWrap>
                <Select id="preset"><option>---</option></Select>
                <Chevron />
              </SelectWrap>
              <label htmlFor="viewport">뷰포트(Shift+Tab):</label>
              <SelectWrap>
                <Select id="viewport"><option>---</option></Select>
                <Chevron />
              </SelectWrap>
            </Presets>
            <HSash />
            <PaneHeader>선택 필터</PaneHeader>
            <FilterGrid>
              {selectionFilters.map(([name, on]) => (
                <Choice key={name}>
                  <Check type="checkbox" defaultChecked={on} />
                  {name}
                </Choice>
              ))}
            </FilterGrid>
          </AppearancePane>
        </Workspace>

        <MessagePanel>
          {messages.map(([top, bottom], i) => (
            <div key={i}>
              <dt>{top}</dt>
              <dd>{bottom}</dd>
            </div>
          ))}
        </MessagePanel>

        <StatusBar>
          {statuses.map(([label, large]) => (
            <StatusCell key={label} $large={large}>{label}</StatusCell>
          ))}
          <StatusCell>
            <svg width="13" height="13" fill="#bdbdbd" aria-hidden="true">
              <path d="M8 0h2v2h-2zM4 4h2v2h-2zM8 4h2v2h-2zM0 8h2v2h-2zM4 8h2v2h-2zM8 8h2v2h-2z" />
            </svg>
          </StatusCell>
        </StatusBar>
      </AppWindow>
    </Page>
  );
}
